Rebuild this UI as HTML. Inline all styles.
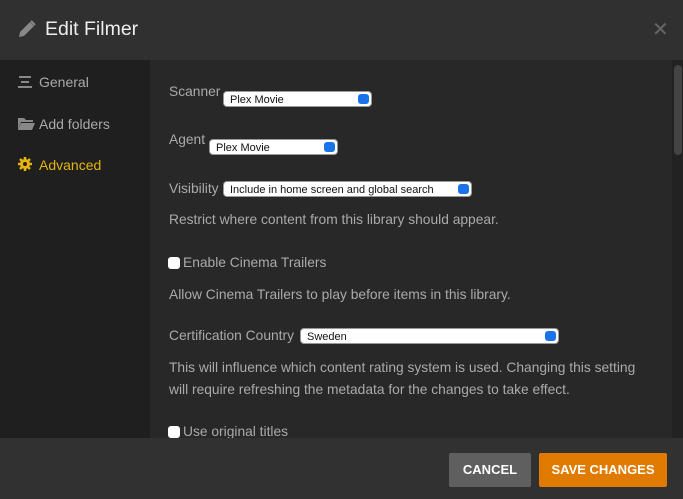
<!DOCTYPE html>
<html><head><style>
*{margin:0;padding:0;box-sizing:border-box}
body{width:683px;height:499px;overflow:hidden;background:#282828;font-family:"Liberation Sans",sans-serif;position:relative;color:#aaa}
.hdr{position:absolute;left:0;top:0;width:683px;height:60px;background:#303030}
.hdr h1{position:absolute;left:45px;top:18px;font-size:19.5px;font-weight:normal;color:#eee}
.x{position:absolute;left:652px;top:17px;font-size:20px;color:#666}
.side{position:absolute;left:0;top:60px;width:150px;height:378px;background:#1f1f1f}
.nav{position:absolute;left:39px;font-size:14px;color:#aaa}
.main{position:absolute;left:150px;top:60px;width:522px;height:378px;background:#282828}
.sb{position:absolute;left:672px;top:60px;width:11px;height:378px;background:#222}
.thumb{position:absolute;left:674px;top:65px;width:8px;height:90px;background:#444;border-radius:4px}
.lbl{position:absolute;font-size:13.8px;color:#aaa;white-space:nowrap}
.sel{position:absolute;height:16px;background:#fff;border-radius:4px;font-size:11px;color:#111;padding:2px 0 0 6px;border:1px solid #999}
.sel:after{content:"";position:absolute;right:2px;top:2px;width:11px;height:10px;background:#1a73e8;border-radius:3px}
.cb{position:absolute;width:12px;height:12px;background:#fff;border-radius:3px}
.ftr{position:absolute;left:0;top:438px;width:683px;height:61px;background:#313131}
.btn{position:absolute;top:453px;height:34px;font-size:13px;font-weight:bold;color:#fff;text-align:center;line-height:34px;border-radius:2px}
</style></head><body>
<div class="hdr">
<svg style="position:absolute;left:18px;top:20px" width="18" height="18" viewBox="0 0 18 18"><path d="M1 17l1-5L12 2l4 4L6 16z" fill="#888"/><path d="M13 1l4 4" stroke="#888" stroke-width="2"/></svg>
<h1>Edit Filmer</h1><div class="x">✕</div></div>
<div class="side">
<svg style="position:absolute;left:18px;top:16px" width="14" height="12"><rect x="1" y="0" width="12" height="2" fill="#888"/><rect x="3" y="5" width="8" height="2" fill="#888"/><rect x="0" y="10" width="14" height="2" fill="#888"/></svg>
<div class="nav" style="top:14px">General</div>
<svg style="position:absolute;left:18px;top:57px" width="17" height="13"><path d="M0 1h6l2 2h7v2H3L0 13z" fill="#888"/><path d="M3 6h14l-3 7H0z" fill="#888"/></svg>
<div class="nav" style="top:56px">Add folders</div>
<svg style="position:absolute;left:18px;top:97px" width="14" height="14" viewBox="0 0 14 14"><circle cx="7" cy="7" r="5" fill="#e5b50d"/><path d="M7 0v14M0 7h14M2 2l10 10M12 2L2 12" stroke="#e5b50d" stroke-width="2.5"/><circle cx="7" cy="7" r="2" fill="#1f1f1f"/></svg>
<div class="nav" style="top:97px;color:#e5b50d">Advanced</div>
</div>
<div class="main"></div>
<div class="sb"></div><div class="thumb"></div>
<div class="lbl" style="left:169px;top:84px">Scanner</div>
<div class="sel" style="left:223px;top:91px;width:149px">Plex Movie</div>
<div class="lbl" style="left:169px;top:132px">Agent</div>
<div class="sel" style="left:209px;top:139px;width:129px">Plex Movie</div>
<div class="lbl" style="left:169px;top:181px">Visibility</div>
<div class="sel" style="left:223px;top:181px;width:249px">Include in home screen and global search</div>
<div class="lbl" style="left:169px;top:212px">Restrict where content from this library should appear.</div>
<div class="cb" style="left:168px;top:257px"></div>
<div class="lbl" style="left:183px;top:255px">Enable Cinema Trailers</div>
<div class="lbl" style="left:169px;top:287px">Allow Cinema Trailers to play before items in this library.</div>
<div class="lbl" style="left:169px;top:328px">Certification Country</div>
<div class="sel" style="left:300px;top:328px;width:259px">Sweden</div>
<div class="lbl" style="left:169px;top:360px">This will influence which content rating system is used. Changing this setting</div>
<div class="lbl" style="left:169px;top:382px">will require refreshing the metadata for the changes to take effect.</div>
<div class="cb" style="left:168px;top:426px"></div>
<div class="lbl" style="left:183px;top:424px">Use original titles</div>
<div class="ftr"></div>
<div class="btn" style="left:449px;width:82px;background:#5f5f5f">CANCEL</div>
<div class="btn" style="left:539px;width:128px;background:#e07b00">SAVE CHANGES</div>
</body></html>
